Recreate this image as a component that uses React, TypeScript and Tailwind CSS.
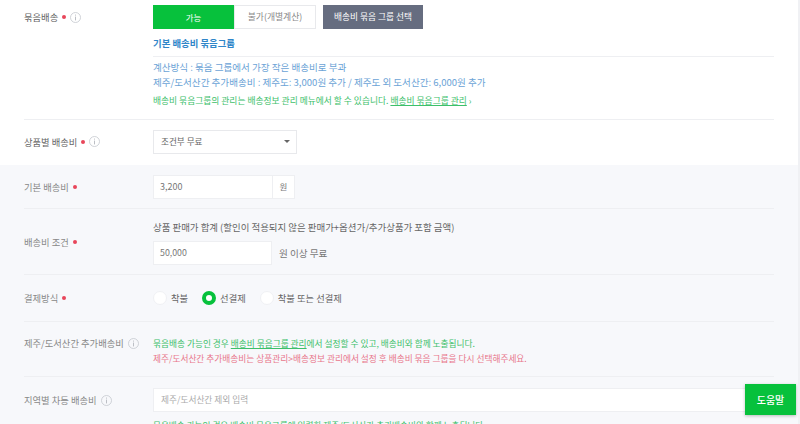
import type { ReactNode } from "react";

function Dot() {
  return <span className="ml-[4px] inline-block w-[4px] h-[4px] rounded-full bg-[#e8465a]" />;
}

function Info() {
  return (
    <svg className="ml-[4px] shrink-0" width="11" height="11" viewBox="0 0 11 11" fill="none">
      <circle cx="5.5" cy="5.5" r="5" stroke="#c4c8ce" strokeWidth="0.8" />
      <path d="M5.5 4.6V8.4M5.5 2.6V3.6" stroke="#b4b8be" strokeWidth="0.9" />
    </svg>
  );
}

function Label({ text, dot, info, color = "text-[#666]" }: { text: string; dot?: boolean; info?: boolean; color?: string }) {
  return (
    <div className={`w-[129px] shrink-0 flex items-center text-[9.3px] leading-[14px] whitespace-nowrap ${color}`}>
      {text}
      {dot && <Dot />}
      {info && <Info />}
    </div>
  );
}

function Row({ children, className }: { children: ReactNode; className: string }) {
  return <div className={`flex border-b border-[#eeeff2] ${className}`}>{children}</div>;
}

function Radio({ text, checked }: { text: string; checked?: boolean }) {
  return (
    <div className="flex items-center gap-[4px] text-[9.3px] leading-[14px] text-[#666]">
      {checked ? (
        <span className="w-[14px] h-[14px] rounded-full border-[4px] border-[#07c13c] bg-white" />
      ) : (
        <span className="w-[14px] h-[14px] rounded-full border border-[#f0f1f4] bg-white" />
      )}
      {text}
    </div>
  );
}

export default function App() {
  return (
    <div className="relative w-[800px] h-[424px] overflow-hidden bg-white border-r-2 border-[#f0f1f4] font-['Noto_Sans_CJK_KR','Noto_Sans',sans-serif]">
      <div className="h-[165px] pl-[24px] pr-[24px]">
        <Row className="h-[120px] pt-[5px]">
          <div className="h-[24px] flex items-center">
            <Label text="묶음배송" dot info />
          </div>
          <div className="flex-1">
            <div className="flex">
              <div className="w-[81px] h-[24px] bg-[#07c13c] text-white text-[8.4px] flex items-center justify-center">가능</div>
              <div className="w-[82px] h-[24px] bg-white border border-[#e8e9ec] text-[#888] text-[8.8px] flex items-center justify-center">불가(개별계산)</div>
              <div className="ml-[7px] w-[100px] h-[24px] bg-[#666d80] text-white text-[8.7px] flex items-center justify-center">배송비 묶음 그룹 선택</div>
            </div>
            <div className="mt-[7px] text-[9.4px] leading-[14px] font-bold text-[#2f86c9]">기본 배송비 묶음그룹</div>
            <div className="mt-[6px] border-t border-[#eeeff2] pt-[3px] text-[9.55px] leading-[15px] text-[#6ba3d6]">
              <div>계산방식 : 묶음 그룹에서 가장 작은 배송비로 부과</div>
              <div>제주/도서산간 추가배송비 : 제주도: 3,000원 추가 / 제주도 외 도서산간: 6,000원 추가</div>
            </div>
            <div className="mt-[5px] text-[8.75px] leading-[12px] text-[#3cc06a]">
              배송비 묶음그룹의 관리는 배송정보 관리 메뉴에서 할 수 있습니다. <span className="underline">배송비 묶음그룹 관리</span> ›
            </div>
          </div>
        </Row>
        <div className="flex items-center h-[45px] -mt-[1px]">
          <Label text="상품별 배송비" dot info />
          <div className="w-[144px] h-[24px] border border-[#e8e9ec] bg-white flex items-center justify-between pl-[7px] pr-[6px] text-[8.6px] text-[#666]">
            조건부 무료
            <span className="w-0 h-0 border-x-[3px] border-x-transparent border-t-[3px] border-t-[#666]" />
          </div>
        </div>
      </div>

      <div className="h-[259px] bg-[#f7f8fb] pl-[24px] pr-[24px]">
        <Row className="h-[44px] items-center">
          <Label text="기본 배송비" dot color="text-[#888]" />
          <div className="flex h-[24px] bg-white border border-[#eeeff2] text-[9px] text-[#777]">
            <div className="w-[118px] flex items-center pl-[6px]">3,200</div>
            <div className="w-[22px] border-l border-[#eeeff2] flex items-center justify-center text-[8.5px]">원</div>
          </div>
        </Row>
        <Row className="h-[66px] items-center">
          <Label text="배송비 조건" dot color="text-[#888]" />
          <div className="pt-[2px]">
            <div className="text-[9.45px] leading-[14px] text-[#666]">상품 판매가 합계 (할인이 적용되지 않은 판매가+옵션가/추가상품가 포함 금액)</div>
            <div className="mt-[7px] flex items-center gap-[7px] text-[9.6px] text-[#777]">
              <div className="w-[119px] h-[24px] bg-white border border-[#eeeff2] flex items-center pl-[6px] text-[8.8px]">50,000</div>
              원 이상 무료
            </div>
          </div>
        </Row>
        <Row className="h-[47px] items-center">
          <Label text="결제방식" dot color="text-[#888]" />
          <div className="flex gap-[14px]">
            <Radio text="착불" />
            <Radio text="선결제" checked />
            <Radio text="착불 또는 선결제" />
          </div>
        </Row>
        <Row className="h-[55px] pt-[14px]">
          <div className="h-[14px] flex items-center">
            <Label text="제주/도서산간 추가배송비" info color="text-[#888]" />
          </div>
          <div className="text-[8.7px] leading-[15px]">
            <div className="text-[#3cc06a]">
              묶음배송 가능인 경우 <span className="underline">배송비 묶음그룹 관리</span>에서 설정할 수 있고, 배송비와 함께 노출됩니다.
            </div>
            <div className="text-[#e8758a]">제주/도서산간 추가배송비는 상품관리&gt;배송정보 관리에서 설정 후 배송비 묶음 그룹을 다시 선택해주세요.</div>
          </div>
        </Row>
        <div className="flex pt-[11px]">
          <div className="h-[24px] flex items-center">
            <Label text="지역별 차등 배송비" info color="text-[#888]" />
          </div>
          <div className="flex-1">
            <div className="h-[24px] bg-white border border-[#eeeff2] flex items-center pl-[7px] text-[8.7px] text-[#aaa]">제주/도서산간 제외 입력</div>
            <div className="mt-[6px] text-[8.65px] leading-[15px] text-[#3cc06a]">묶음배송 가능인 경우 배송비 묶음그룹에 입력한 제주/도서산간 추가배송비와 함께 노출됩니다.</div>
          </div>
        </div>
      </div>

      <div className="absolute left-[745px] top-[384px] w-[51px] h-[31px] bg-[#07c13c] text-white text-[10px] font-medium flex items-center justify-center shadow-[0_1px_3px_rgba(0,0,0,0.25)]">
        도움말
      </div>
    </div>
  );
}
